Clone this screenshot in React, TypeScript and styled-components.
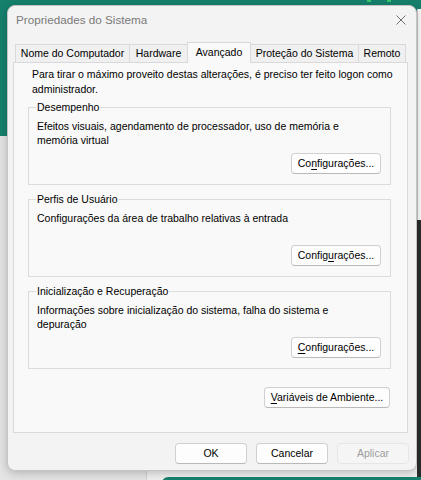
import React from "react";
import styled, { createGlobalStyle } from "styled-components";

const GlobalStyle = createGlobalStyle`
  html, body { margin: 0; padding: 0; }
  body {
    width: 421px;
    height: 480px;
    overflow: hidden;
    background: #16806d;
    font-family: "Liberation Sans", Arial, sans-serif;
  }
`;

const Desktop = styled.div`
  position: relative;
  width: 421px;
  height: 480px;
  overflow: hidden;
  background: #16806d;
`;

const Piece = styled.div<{
  $x: number;
  $y: number;
  $w: number;
  $h: number;
  $bg: string;
  $radius?: number;
  $edge?: string;
}>`
  position: absolute;
  left: ${(p) => p.$x}px;
  top: ${(p) => p.$y}px;
  width: ${(p) => p.$w}px;
  height: ${(p) => p.$h}px;
  background: ${(p) => p.$bg};
  border-radius: ${(p) => p.$radius ?? 0}px;
  border-left: ${(p) => (p.$edge ? `1px solid ${p.$edge}` : "none")};
  box-sizing: border-box;
`;

const Window = styled.div`
  position: absolute;
  left: 7px;
  top: 5px;
  width: 410px;
  height: 466px;
  box-sizing: border-box;
  background: #f3f3f3;
  border: 1px solid #c4c4c4;
  border-radius: 8px;
  box-shadow: 0 2px 10px rgba(0, 0, 0, 0.22);
  display: flex;
  flex-direction: column;
  overflow: hidden;
  font-family: "Liberation Sans", Arial, sans-serif;
  font-size: 10.5px;
  color: #000;
`;

const TitleBar = styled.div`
  height: 36px;
  box-sizing: border-box;
  padding: 0 10px 8px 8px;
  display: flex;
  align-items: center;
  justify-content: space-between;
`;

const Title = styled.span`
  font-size: 11.7px;
  color: #7a7a7a;
  line-height: 16px;
`;

const CloseIcon = styled.svg`
  display: block;
  width: 10px;
  height: 10px;
`;

const TabRow = styled.div`
  position: relative;
  z-index: 1;
  height: 21px;
  margin-left: 7px;
  display: flex;
  align-items: flex-end;
`;

const Tab = styled.div<{ $width: number; $active?: boolean }>`
  box-sizing: border-box;
  width: ${(p) => p.$width}px;
  height: ${(p) => (p.$active ? 21 : 18)}px;
  margin-bottom: ${(p) => (p.$active ? 0 : 1)}px;
  margin-left: -1px;
  &:first-child { margin-left: 0; }
  border: 1px solid #d9d9d9;
  border-bottom: none;
  background: ${(p) => (p.$active ? "#f9f9f9" : "#f0f0f0")};
  position: relative;
  z-index: ${(p) => (p.$active ? 2 : 1)};
  display: flex;
  align-items: center;
  justify-content: center;
  padding-bottom: ${(p) => (p.$active ? 2 : 0)}px;
  white-space: nowrap;
  line-height: 15px;
`;

const Panel = styled.div`
  box-sizing: border-box;
  height: 371px;
  margin: -1px 8px 0 5px;
  padding: 4px 16px 0 14px;
  border: 1px solid #d9d9d9;
  background: #f9f9f9;
  display: flex;
  flex-direction: column;
`;

const Intro = styled.p`
  margin: 0 -8px 3px 4px;
  line-height: 15px;
`;

const Group = styled.fieldset`
  margin: 0 0 7px 0;
  padding: 4px 9px 10px 8px;
  border: 1px solid #dcdcdc;
  min-width: 0;
  &:last-of-type { margin-bottom: 14px; }
`;

const Legend = styled.legend`
  padding: 0 1px;
  margin-left: -1px;
  line-height: 15px;
`;

const Description = styled.div`
  min-height: 30px;
  max-width: 320px;
  line-height: 14px;
`;

const ButtonRow = styled.div<{ $pad?: number }>`
  display: flex;
  justify-content: flex-end;
  gap: 9px;
  margin-top: 4px;
  padding-right: ${(p) => p.$pad ?? 0}px;
`;

const Button = styled.button<{ $width: number; $disabled?: boolean }>`
  box-sizing: border-box;
  width: ${(p) => p.$width}px;
  height: 21px;
  padding: 0;
  font-family: inherit;
  font-size: 10.5px;
  line-height: 19px;
  color: ${(p) => (p.$disabled ? "#9d9d9d" : "#000")};
  background: ${(p) => (p.$disabled ? "#f5f5f5" : "#fdfdfd")};
  border: 1px solid ${(p) => (p.$disabled ? "#e6e6e6" : "#d0d0d0")};
  border-bottom-color: ${(p) => (p.$disabled ? "#e6e6e6" : "#b9b9b9")};
  border-radius: 4px;
  white-space: nowrap;
`;

const Mnemonic = styled.span`
  text-decoration: underline;
  text-underline-offset: 2px;
`;

const Footer = styled.div`
  display: flex;
  justify-content: flex-end;
  gap: 9px;
  padding: 10px 7px 0 0;
`;

const tabs = [
  { label: "Nome do Computador", width: 115 },
  { label: "Hardware", width: 59 },
  { label: "Avançado", width: 64, active: true },
  { label: "Proteção do Sistema", width: 109 },
  { label: "Remoto", width: 48 },
];

export default function App() {
  return (
    <>
      <GlobalStyle />
      <Desktop>
        <Piece $x={0} $y={136} $w={146} $h={344} $bg="#e4e4e4" />
        <Piece $x={146} $y={200} $w={275} $h={280} $bg="#efefef" $edge="#d2d2d2" />
        <Piece $x={417} $y={9} $w={10} $h={211} $bg="#fbfbfb" $edge="#c9c9c9" />
        <Piece $x={417} $y={220} $w={10} $h={257} $bg="#2b2d2c" />
        <Piece $x={162} $y={477} $w={280} $h={20} $bg="#16806d" $radius={6} />
        <Piece $x={367} $y={0} $w={4} $h={2} $bg="#37c66f" />
        <Piece $x={387} $y={0} $w={4} $h={2} $bg="#37c66f" />
        <Window>
          <TitleBar>
            <Title>Propriedades do Sistema</Title>
            <CloseIcon viewBox="0 0 10 10" aria-label="Fechar">
              <path d="M0.5 0.5 L9.5 9.5 M9.5 0.5 L0.5 9.5" stroke="#707070" strokeWidth="1" fill="none" />
            </CloseIcon>
          </TitleBar>
          <TabRow>
            {tabs.map((t) => (
              <Tab key={t.label} $width={t.width} $active={t.active}>
                {t.label}
              </Tab>
            ))}
          </TabRow>
          <Panel>
            <Intro>
              Para tirar o máximo proveito destas alterações, é preciso ter feito logon como administrador.
            </Intro>
            <Group>
              <Legend>Desempenho</Legend>
              <Description>
                Efeitos visuais, agendamento de processador, uso de memória e memória virtual
              </Description>
              <ButtonRow>
                <Button $width={90}>
                  Co<Mnemonic>n</Mnemonic>figurações...
                </Button>
              </ButtonRow>
            </Group>
            <Group>
              <Legend>Perfis de Usuário</Legend>
              <Description>Configurações da área de trabalho relativas à entrada</Description>
              <ButtonRow>
                <Button $width={90}>
                  Config<Mnemonic>u</Mnemonic>rações...
                </Button>
              </ButtonRow>
            </Group>
            <Group>
              <Legend>Inicialização e Recuperação</Legend>
              <Description>
                Informações sobre inicialização do sistema, falha do sistema e depuração
              </Description>
              <ButtonRow>
                <Button $width={90}>
                  <Mnemonic>C</Mnemonic>onfigurações...
                </Button>
              </ButtonRow>
            </Group>
            <ButtonRow $pad={1}>
              <Button $width={126}>
                <Mnemonic>V</Mnemonic>ariáveis de Ambiente...
              </Button>
            </ButtonRow>
          </Panel>
          <Footer>
            <Button $width={72}>OK</Button>
            <Button $width={72}>Cancelar</Button>
            <Button $width={72} $disabled>
              Aplicar
            </Button>
          </Footer>
        </Window>
      </Desktop>
    </>
  );
}
